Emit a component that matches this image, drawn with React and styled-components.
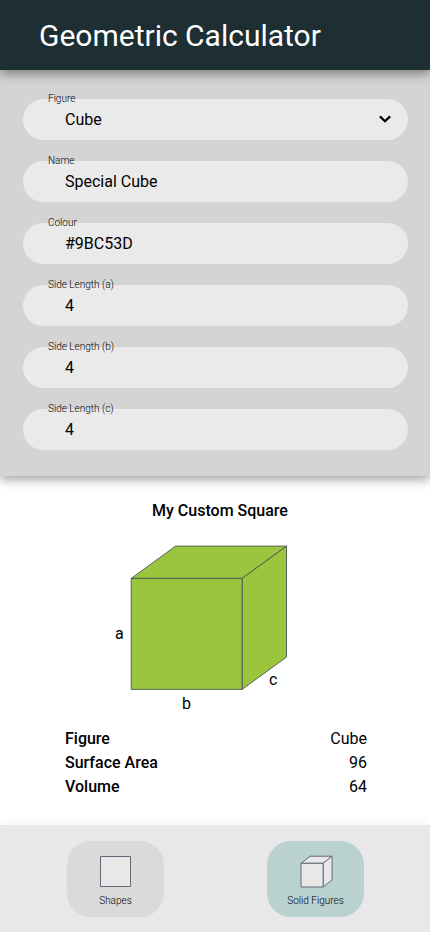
import React from "react";
import styled, { createGlobalStyle } from "styled-components";

const GlobalStyle = createGlobalStyle`
  * { box-sizing: border-box; }
  body {
    margin: 0;
    background: #fff;
    color: #000;
    font-family: Roboto, "Liberation Sans", sans-serif;
    font-size: 16px;
  }
`;

const Page = styled.div`
  display: flex;
  flex-direction: column;
  width: 430px;
  height: 932px;
  overflow: hidden;
`;

const Header = styled.header`
  position: relative;
  z-index: 2;
  display: flex;
  align-items: center;
  height: 70px;
  padding: 2px 39px 0;
  background: #1d2f33;
  box-shadow: 0 4px 10px rgba(0, 0, 0, 0.4);
`;

const Title = styled.h1`
  margin: 0;
  color: #fff;
  font-size: 30px;
  font-weight: 400;
  line-height: 36px;
`;

const Form = styled.form`
  position: relative;
  z-index: 1;
  display: flex;
  flex-direction: column;
  gap: 21px;
  height: 406px;
  padding: 29px 22px 0 23px;
  background: #d4d4d4;
  box-shadow: 0 4px 10px rgba(0, 0, 0, 0.35);
`;

const Field = styled.div`
  position: relative;
  display: flex;
  align-items: center;
  justify-content: space-between;
  height: 41px;
  padding: 0 16px 0 42px;
  border-radius: 20.5px;
  background: #eaeaea;
  line-height: 20px;
`;

const Label = styled.label`
  position: absolute;
  top: -6px;
  left: 25px;
  color: #000;
  font-size: 10px;
  font-weight: 300;
  line-height: 12px;
`;

const Chevron = styled.svg`
  width: 14px;
  height: 14px;
  margin-top: -2px;
  fill: none;
  stroke: #000;
  stroke-width: 2.2;
`;

const Result = styled.main`
  display: flex;
  flex-direction: column;
  height: 349px;
  padding: 25px 63px 0 65px;
`;

const ResultTitle = styled.h2`
  margin: 0 0 14px;
  padding-left: 8px;
  font-size: 16px;
  font-weight: 500;
  line-height: 20px;
  text-align: center;
`;

const Drawing = styled.svg`
  display: block;
  width: 200px;
  height: 180px;
  margin: 0 0 12px 35px;
`;

const Facts = styled.dl`
  margin: 0;
`;

const Fact = styled.div`
  display: flex;
  justify-content: space-between;
  line-height: 24px;
`;

const Term = styled.dt`
  font-weight: 500;
`;

const Value = styled.dd`
  margin: 0;
`;

const Nav = styled.nav`
  display: flex;
  justify-content: space-between;
  height: 107px;
  padding: 16px 66px 0 67px;
  background: #e8e8e8;
  box-shadow: 0 -4px 10px rgba(0, 0, 0, 0.03);
`;

const NavItem = styled.button`
  display: flex;
  flex-direction: column;
  align-items: center;
  width: 97px;
  height: 76px;
  padding: 14px 0 0;
  border: 0;
  border-radius: 24px;
  background: ${({ $active }) => ($active ? "#b9d2d0" : "#dadada")};
  color: #000;
  font-family: inherit;
  font-size: 10px;
  font-weight: 300;
  line-height: 12px;
`;

const NavIcon = styled.svg`
  width: 35px;
  height: 34px;
  margin-bottom: 6px;
  fill: #e8e8e8;
  stroke: #666a78;
  stroke-width: 1;
  stroke-linejoin: round;
`;

const fields = [
  ["Figure", "Cube"],
  ["Name", "Special Cube"],
  ["Colour", "#9BC53D"],
  ["Side Length (a)", "4"],
  ["Side Length (b)", "4"],
  ["Side Length (c)", "4"],
];

const facts = [
  ["Figure", "Cube"],
  ["Surface Area", "96"],
  ["Volume", "64"],
];

export default function App() {
  return (
    <Page>
      <GlobalStyle />
      <Header>
        <Title>Geometric Calculator</Title>
      </Header>
      <Form>
        {fields.map(([label, value], i) => (
          <Field key={label}>
            <Label>{label}</Label>
            <span>{value}</span>
            {i === 0 && (
              <Chevron viewBox="0 0 14 14">
                <path d="M1.9 4.4 7 9.3 12.1 4.4" />
              </Chevron>
            )}
          </Field>
        ))}
      </Form>
      <Result>
        <ResultTitle>My Custom Square</ResultTitle>
        <Drawing viewBox="100 535 200 180">
          <g fill="#9bc53d" stroke="#4d5359" strokeWidth="0.9" strokeLinejoin="round">
            <path d="M131.2 578.4 175.6 546.1H286.5L242.1 578.4Z" />
            <path d="M242.1 578.4 286.5 546.1V657.1L242.1 689.4Z" />
            <path d="M131.2 578.4H242.1V689.4H131.2Z" />
          </g>
          <text x="115" y="639">a</text>
          <text x="182" y="709">b</text>
          <text x="269" y="685">c</text>
        </Drawing>
        <Facts>
          {facts.map(([term, value]) => (
            <Fact key={term}>
              <Term>{term}</Term>
              <Value>{value}</Value>
            </Fact>
          ))}
        </Facts>
      </Result>
      <Nav>
        <NavItem>
          <NavIcon viewBox="0 0 35 34">
            <path d="M2.5 1.5H32.5V31.5H2.5Z" />
          </NavIcon>
          Shapes
        </NavItem>
        <NavItem $active>
          <NavIcon viewBox="0 0 35 34">
            <path d="M3 8.3 12.2 1.2H34.1L25.1 8.3Z" />
            <path d="M25.1 8.3 34.1 1.2V25L25.1 32Z" />
            <path d="M3 8.3H25.1V32H3Z" />
          </NavIcon>
          Solid Figures
        </NavItem>
      </Nav>
    </Page>
  );
}
